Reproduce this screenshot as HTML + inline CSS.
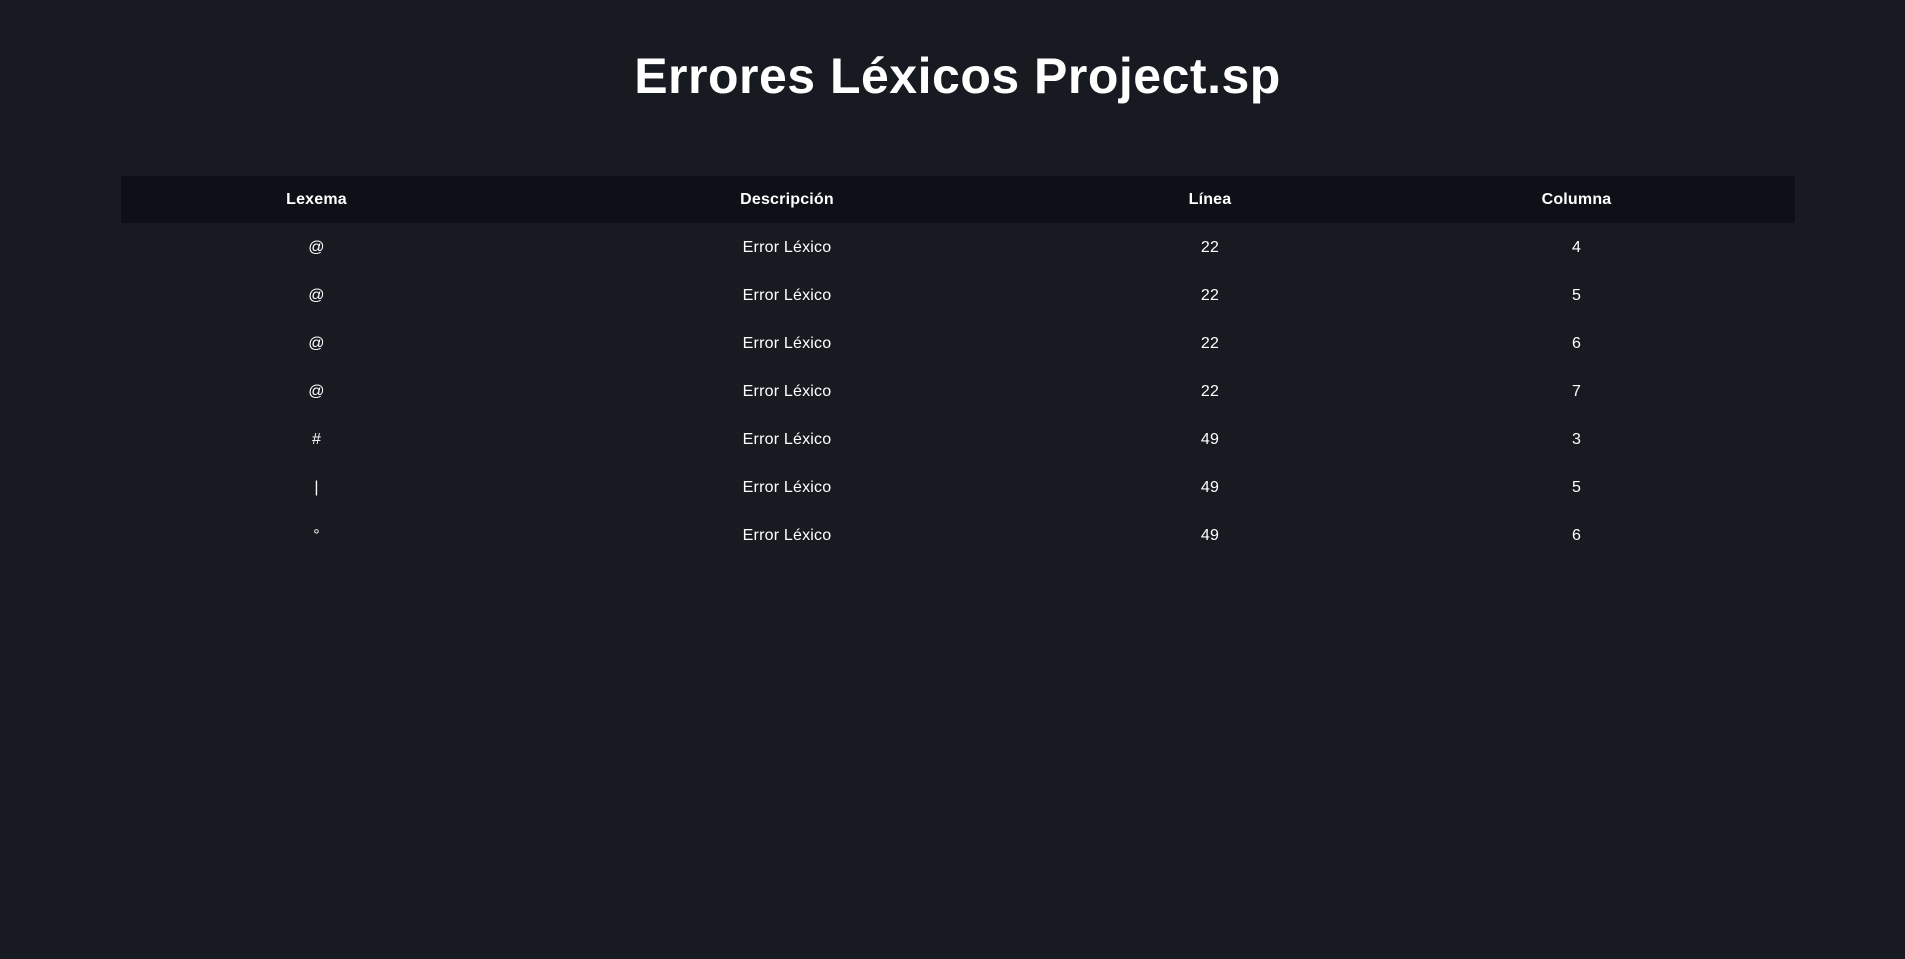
<!DOCTYPE html>
<html><head><meta charset="utf-8"><style>
html,body{margin:0;background:#171a21;width:1905px;height:959px;overflow:hidden;font-family:"Liberation Sans",sans-serif;color:#fff}
h1{margin:0;position:absolute;top:46px;left:5px;width:1905px;text-align:center;font-size:50px;font-weight:bold;line-height:60px;letter-spacing:0.5px}
table{position:absolute;left:121px;top:176px;width:1674px;border-collapse:collapse;table-layout:fixed}
th{background:#0e1017;height:47px;font-size:16px;font-weight:bold;padding:1px 0 0 0;letter-spacing:0.2px;box-sizing:border-box}
td{height:47px;font-size:16px;text-align:center;padding:1px 0 0 0;letter-spacing:0.2px}
</style></head><body>
<h1>Errores Léxicos Project.sp</h1>
<table>
<colgroup><col style="width:391px"><col style="width:550px"><col style="width:296px"><col style="width:437px"></colgroup>
<tr><th>Lexema</th><th>Descripción</th><th>Línea</th><th>Columna</th></tr>
<tr><td>@</td><td>Error Léxico</td><td>22</td><td>4</td></tr>
<tr><td>@</td><td>Error Léxico</td><td>22</td><td>5</td></tr>
<tr><td>@</td><td>Error Léxico</td><td>22</td><td>6</td></tr>
<tr><td>@</td><td>Error Léxico</td><td>22</td><td>7</td></tr>
<tr><td>#</td><td>Error Léxico</td><td>49</td><td>3</td></tr>
<tr><td>|</td><td>Error Léxico</td><td>49</td><td>5</td></tr>
<tr><td>°</td><td>Error Léxico</td><td>49</td><td>6</td></tr>
</table>
</body></html>
